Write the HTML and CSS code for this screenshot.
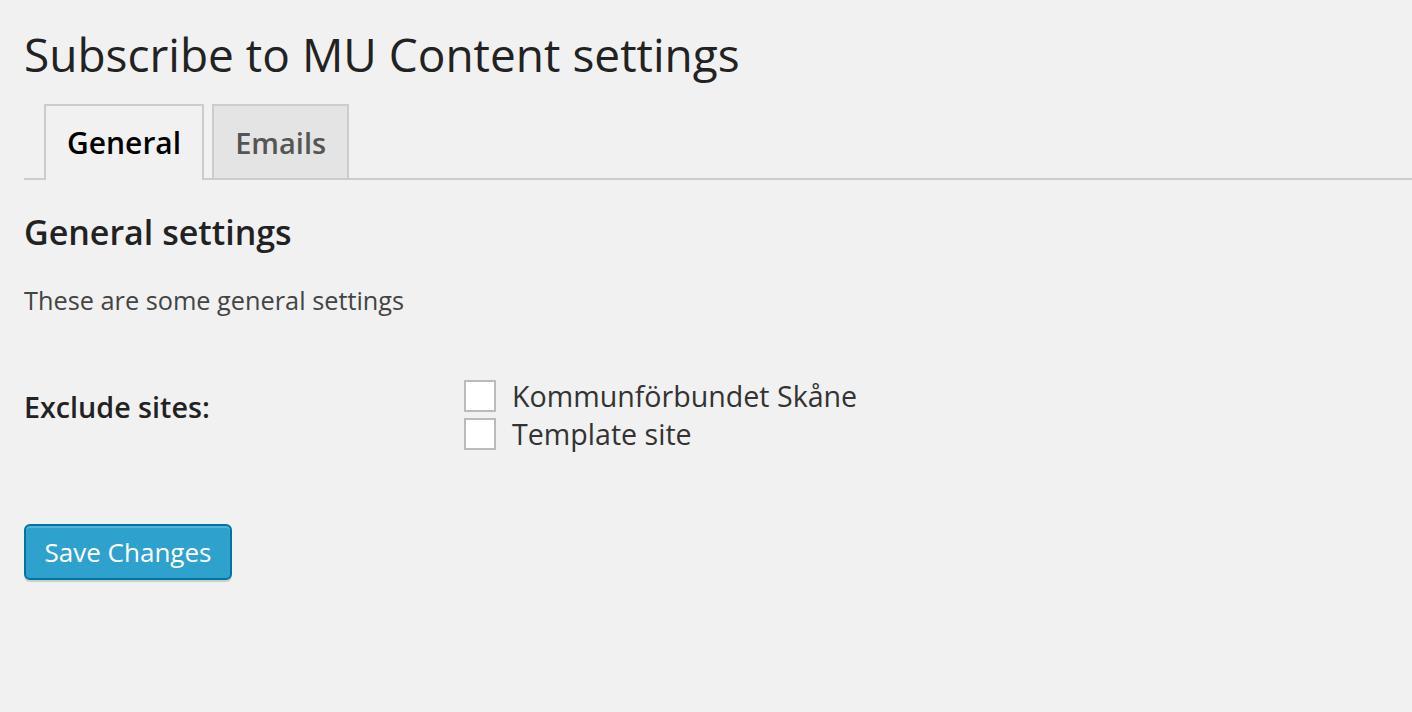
FILE: index.html
```html
<!DOCTYPE html>
<html>
<head>
<meta charset="utf-8">
<link rel="stylesheet" href="styles.css">
</head>
<body>
<div class="wrap">
  <h2 class="title">Subscribe to MU Content settings</h2>
  <nav class="tabs">
    <span class="tab active">General</span>
    <span class="tab">Emails</span>
  </nav>
  <h3 class="section">General settings</h3>
  <p class="desc">These are some general settings</p>
  <div class="row">
    <div class="label">Exclude sites:</div>
    <div class="options">
      <label class="opt"><span class="box"></span>Kommunförbundet Skåne</label>
      <label class="opt"><span class="box"></span>Template site</label>
    </div>
  </div>
  <button class="btn">Save Changes</button>
</div>
</body>
</html>
```
FILE: styles.css
```css
html, body { margin: 0; padding: 0; }
body {
  background: #f1f1f1;
  font-family: "Open Sans", "Liberation Sans", sans-serif;
  color: #444;
  width: 1412px;
  height: 712px;
  overflow: hidden;
}
.wrap { padding: 0 0 0 24px; }
.title {
  margin: 0;
  padding-top: 26px;
  font-size: 46px;
  font-weight: 400;
  line-height: 56px;
  color: #222;
}
.tabs {
  margin-top: 22px;
  display: flex;
  gap: 8px;
  padding-left: 20px;
  border-bottom: 2px solid #ccc;
  height: 74px;
  align-items: flex-start;
}
.tab {
  box-sizing: border-box;
  height: 74px;
  padding: 0 21px;
  font-size: 29px;
  font-weight: 600;
  line-height: 74px;
  color: #555;
  background: #e4e4e4;
  border: 2px solid #ccc;
  border-bottom: none;
}
.tab.active {
  background: #f1f1f1;
  color: #000;
  font-size: 30px;
  height: 76px;
  margin-bottom: -2px;
}
.section {
  margin: 32px 0 0;
  font-size: 34px;
  font-weight: 600;
  line-height: 40px;
  color: #222;
}
.desc {
  margin: 28px 0 0;
  font-size: 25.3px;
  line-height: 40px;
  color: #444;
}
.row {
  display: flex;
  margin-top: 57px;
}
.label {
  width: 440px;
  font-size: 28.7px;
  font-weight: 600;
  color: #222;
  padding-top: 10px;
  line-height: 40px;
}
.options { display: flex; flex-direction: column; gap: 0; }
.opt {
  display: flex;
  align-items: center;
  font-size: 28.6px;
  line-height: 38px;
  color: #333;
}
.box {
  box-sizing: border-box;
  width: 32px;
  height: 32px;
  background: #fff;
  border: 2px solid #bbb;
  margin-right: 16px;
}
.btn {
  margin-top: 71px;
  box-sizing: border-box;
  height: 56px;
  width: 208px;
  padding: 0;
  font-family: "Open Sans", "Liberation Sans", sans-serif;
  font-size: 26px;
  color: #fff;
  background: #2ea2cc;
  border: 2px solid #0074a2;
  border-radius: 6px;
  box-shadow: inset 0 2px 0 rgba(120,200,230,0.5), 0 2px 0 rgba(0,0,0,0.15);
}
```
